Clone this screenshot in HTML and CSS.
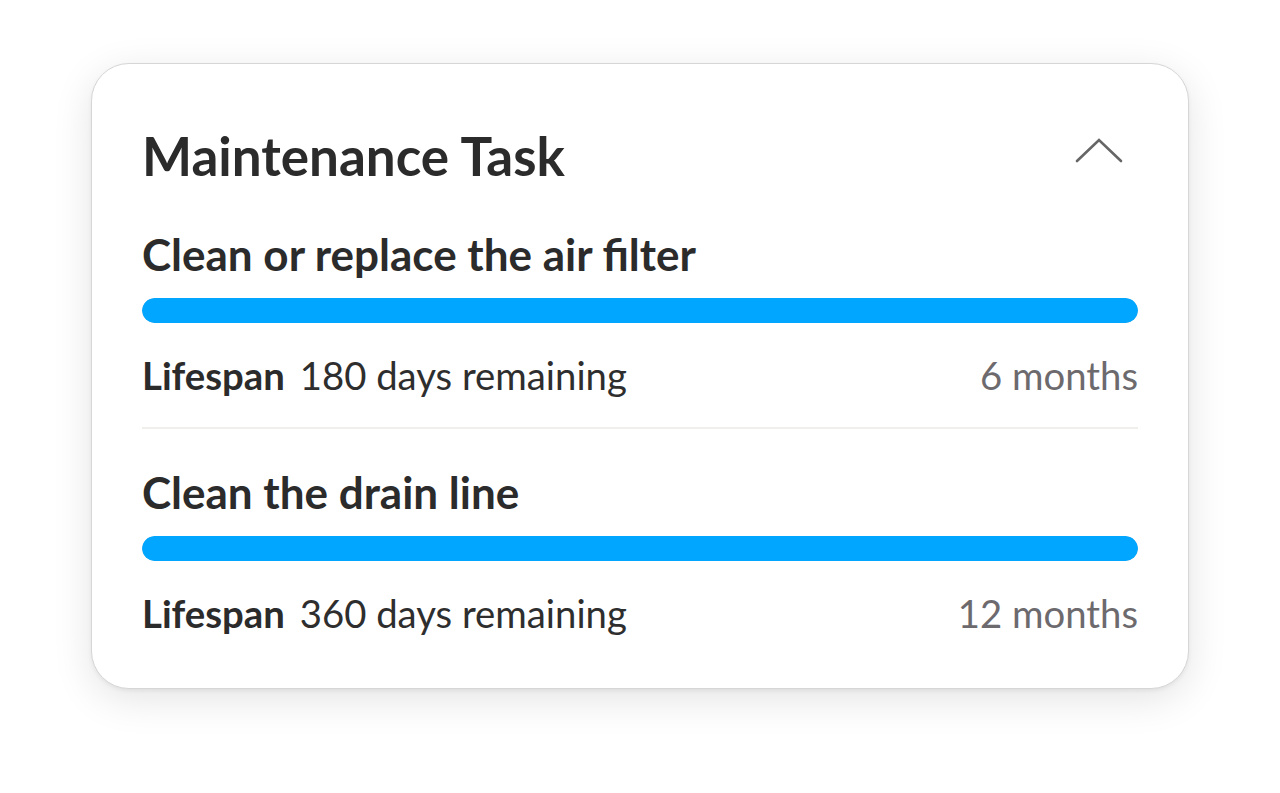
FILE: index.html
```html
<!DOCTYPE html>
<html>
<head>
    <title>Maintenance Task</title>
    <link rel="stylesheet" href="styles.css">
</head>
<body>
    <div class="card">
        <div class="card-head">
            <h1 class="card-title">Maintenance Task</h1>
            <button class="toggle" type="button" aria-label="Collapse">
                <svg width="48" height="26" viewBox="0 0 48 26">
                    <polyline points="2,23 24,2 46,23" fill="none" stroke="#666" stroke-width="2.6" stroke-linecap="round" stroke-linejoin="miter"/>
                </svg>
            </button>
        </div>
        <ul class="tasks">
            <li class="task">
                <h2 class="task-name">Clean or replace the air filter</h2>
                <div class="bar"><div class="bar-fill" style="width: 100%"></div></div>
                <div class="task-meta">
                    <span><b>Lifespan</b> 180 days remaining</span>
                    <span class="period">6 months</span>
                </div>
            </li>
            <li class="task">
                <h2 class="task-name">Clean the drain line</h2>
                <div class="bar"><div class="bar-fill" style="width: 100%"></div></div>
                <div class="task-meta">
                    <span><b>Lifespan</b> 360 days remaining</span>
                    <span class="period">12 months</span>
                </div>
            </li>
        </ul>
    </div>
</body>
</html>
```

FILE: styles.css
```css
*{
    margin: 0;
    padding: 0;
    box-sizing: border-box;
}
ul,ol{
    list-style: none;
}
html,body{
    background: #fff;
}
body{
    min-height: 100vh;
    padding: 63px 0 0 91px;
    font-family: Lato, "Open Sans", sans-serif;
    color: #2b2b2b;
}
.card{
    width: 1098px;
    padding: 60px 50px 52px;
    background: #fff;
    border: 1px solid #d6d6d6;
    border-radius: 38px;
    box-shadow: 0 10px 40px rgba(0,0,0,.11), 0 2px 4px rgba(0,0,0,.06);
}
.card-head{
    display: flex;
    align-items: flex-start;
    justify-content: space-between;
}
.card-title{
    font-size: 53px;
    font-weight: 700;
    line-height: 64px;
}
.toggle{
    border: 0;
    background: none;
    margin: 14px 15px 0 0;
    display: flex;
}
.tasks{
    margin-top: 40px;
}
.task{
    padding-bottom: 29px;
}
.task:last-child{
    padding-bottom: 0;
}
.task + .task{
    border-top: 2px solid #f0efec;
    padding-top: 37px;
}
.task-name{
    font-size: 44px;
    font-weight: 700;
    line-height: 52px;
}
.bar{
    height: 25px;
    border-radius: 13px;
    background: #e6e6e6;
    margin-top: 18px;
    overflow: hidden;
}
.bar-fill{
    height: 100%;
    background: #00a6ff;
    border-radius: 13px;
}
.task-meta{
    display: flex;
    justify-content: space-between;
    font-size: 38.3px;
    line-height: 46px;
    margin-top: 29px;
    color: #2e2e2e;
}
.task-meta b{
    font-weight: 700;
    color: #2b2b2b;
    margin-right: 5px;
}
.period{
    color: #6d6a6e;
}
```
